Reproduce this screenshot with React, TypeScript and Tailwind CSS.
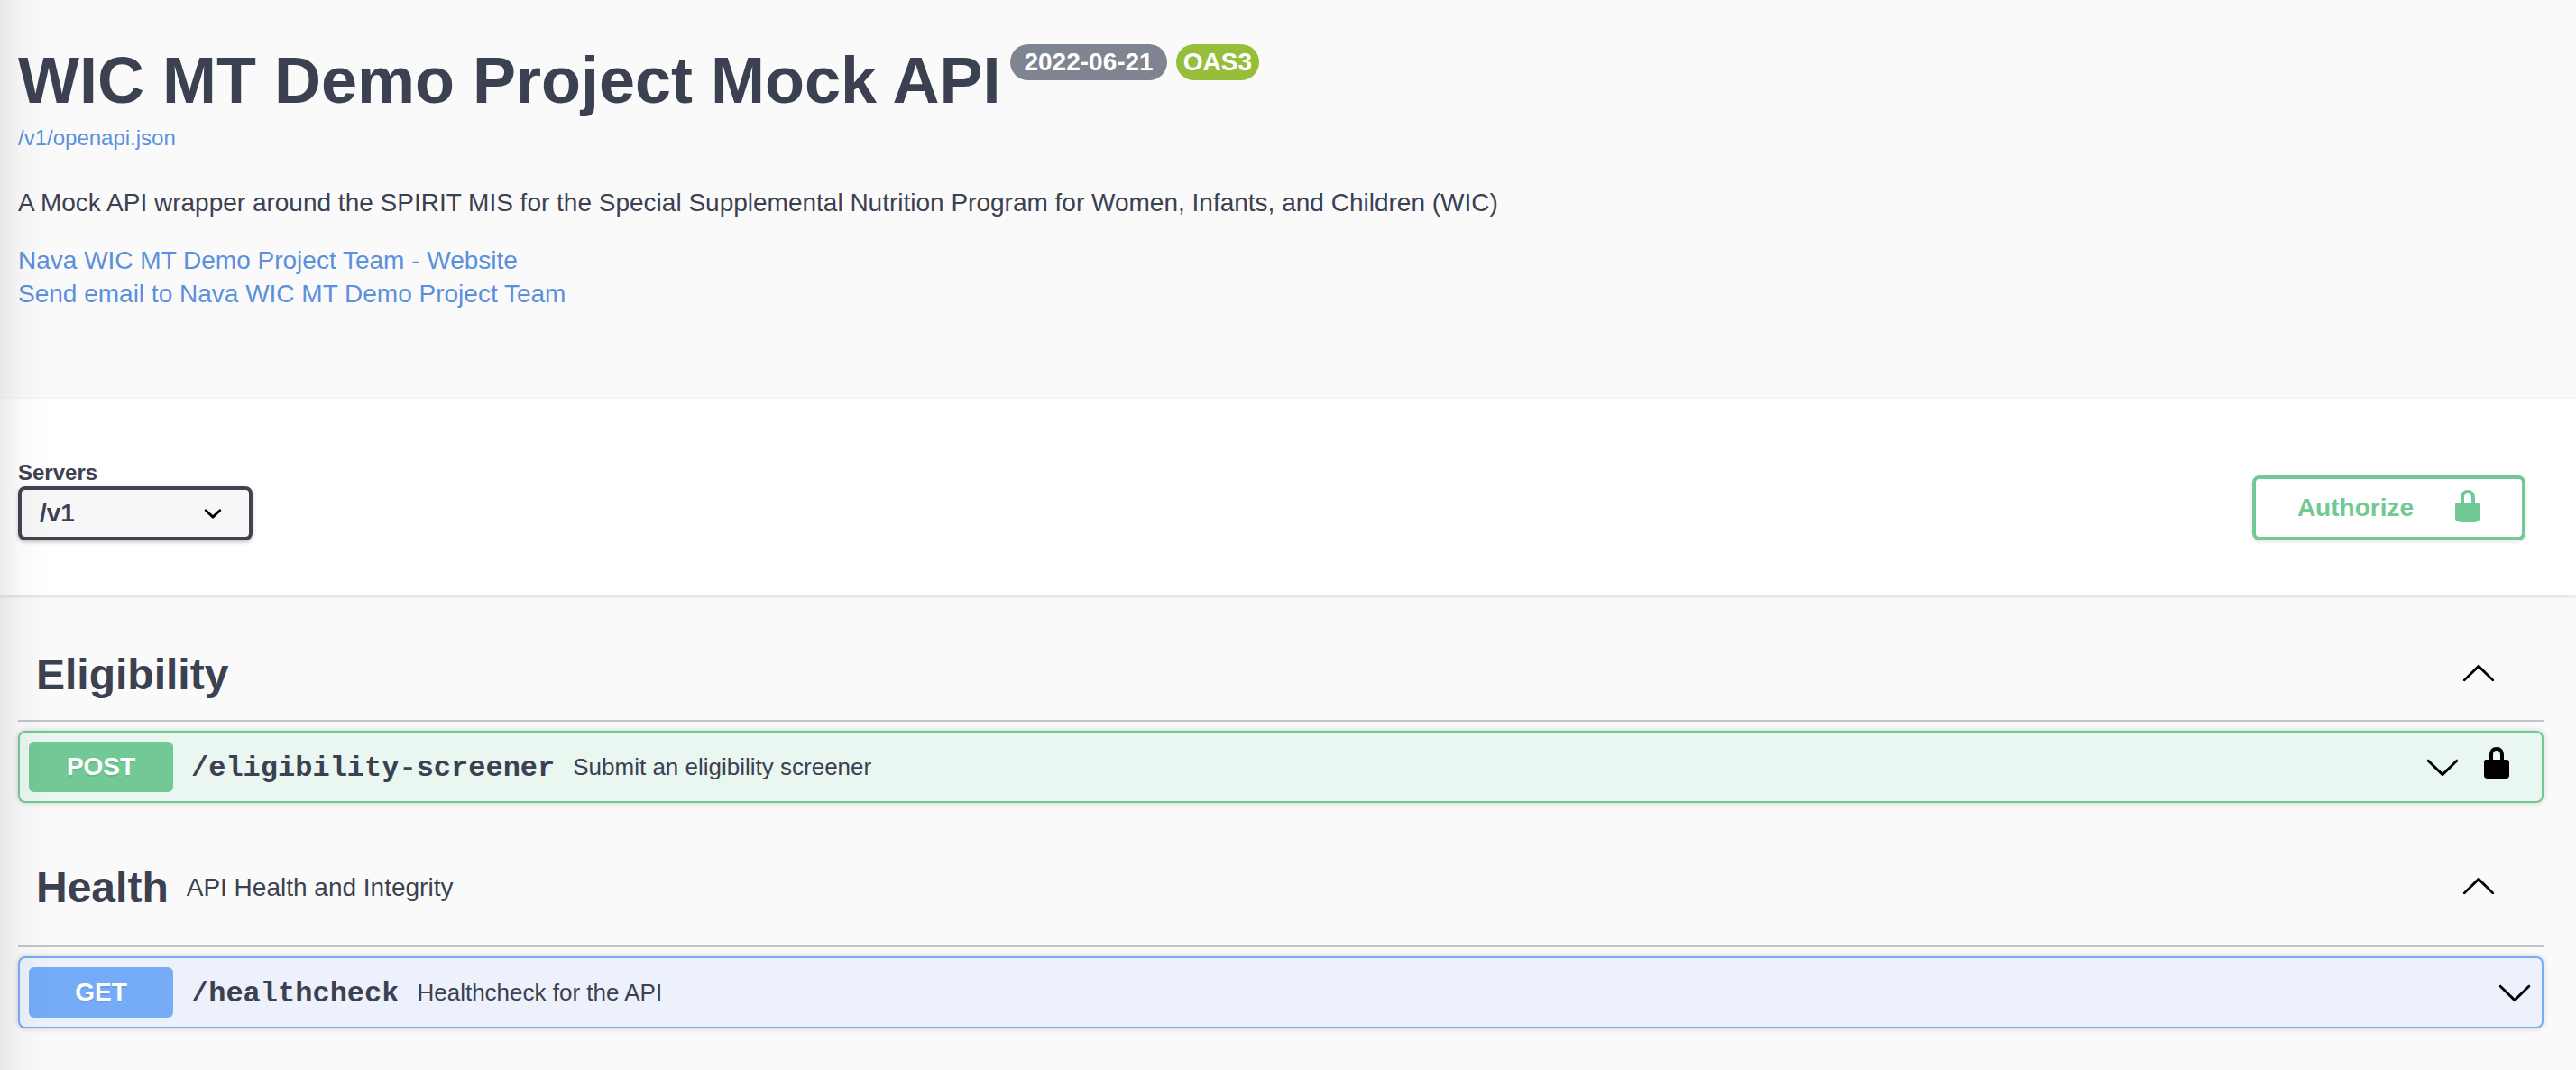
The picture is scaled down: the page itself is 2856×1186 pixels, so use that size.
import { useState } from "react";

function LockIcon() {
  return (
    <svg viewBox="0 0 20 20" className="size-10 fill-current" aria-hidden="true">
      <path d="M15.8 8H14V5.6C14 2.703 12.665 1 10 1 7.334 1 6 2.703 6 5.6V8H4c-.553 0-1 .646-1 1.199V17c0 .549.428 1.139.951 1.307l1.197.387C5.672 18.861 6.55 19 7.1 19h5.8c.549 0 1.428-.139 1.951-.307l1.196-.387c.524-.167.953-.757.953-1.306V9.199C17 8.646 16.352 8 15.8 8zM12 8H8V5.199C8 3.754 8.797 3 10 3c1.203 0 2 .754 2 2.199V8z" />
    </svg>
  );
}

function ChevronDown() {
  return (
    <svg viewBox="0 0 20 20" className="size-10 fill-current" aria-hidden="true">
      <path d="M17.418 6.109c.272-.268.709-.268.979 0s.271.701 0 .969l-7.908 7.83c-.27.268-.707.268-.979 0l-7.908-7.83c-.27-.268-.27-.701 0-.969.271-.268.709-.268.979 0L10 13.25l7.418-7.141z" />
    </svg>
  );
}

function ChevronUp() {
  return (
    <svg viewBox="0 0 20 20" className="size-10 fill-current" aria-hidden="true">
      <path d="M17.418 14.908c.272.268.709.268.979 0s.271-.701 0-.969l-7.908-7.83c-.27-.268-.707-.268-.979 0l-7.908 7.83c-.27.268-.27.701 0 .969.271.268.709.268.979 0L10 7.767l7.418 7.141z" />
    </svg>
  );
}

type Operation = {
  method: "POST" | "GET";
  path: string;
  summary: string;
  locked?: boolean;
};

const methodStyles = {
  POST: { row: "border-[#72c995] bg-[#eaf6f0]", badge: "bg-[#72c995]" },
  GET: { row: "border-[#75abf7] bg-[#ecf1fb]", badge: "bg-[#75abf7]" },
};

function OperationRow({ method, path, summary, locked }: Operation) {
  const style = methodStyles[method];
  return (
    <div
      className={`mt-2.5 flex items-center rounded-lg border-2 p-2.5 shadow-[0_0_6px_rgba(0,0,0,0.19)] ${style.row}`}
    >
      <button type="button" className="flex min-w-0 flex-1 items-center text-left">
        <span
          className={`w-40 shrink-0 rounded-md text-center text-[28px] leading-[56px] font-bold text-white [text-shadow:0_2px_0_rgba(0,0,0,0.1)] ${style.badge}`}
        >
          {method}
        </span>
        <span className="px-5 pt-1 font-['Liberation_Mono',monospace] text-[32px] leading-9 font-bold">
          {path}
        </span>
        <span className="flex-1 text-[26px] leading-9">{summary}</span>
        <span className="text-black">
          <ChevronDown />
        </span>
      </button>
      {locked && (
        <button type="button" aria-label="Authorization required" className="mb-2 px-5 text-black">
          <LockIcon />
        </button>
      )}
    </div>
  );
}

function TagSection({
  name,
  description,
  operations,
}: {
  name: string;
  description?: string;
  operations: Operation[];
}) {
  const [open, setOpen] = useState(true);
  return (
    <section>
      <div
        className={`flex items-center border-b-2 border-[#c1c3c9] pt-5 pr-[52px] pl-5 ${
          description ? "pb-9" : "pb-[22px]"
        }`}
      >
        <h3 className="text-[48px] leading-[56px] font-bold">{name}</h3>
        <p className="flex-1 px-5 text-[28px] leading-9">{description}</p>
        <button
          type="button"
          aria-label={`Toggle ${name}`}
          aria-expanded={open}
          onClick={() => setOpen(!open)}
          className="mb-1.5 text-black"
        >
          <ChevronUp />
        </button>
      </div>
      {open && operations.map((op) => <OperationRow key={op.path} {...op} />)}
    </section>
  );
}

export default function App() {
  return (
    <div className="relative min-h-screen bg-[#fafafa] font-['Liberation_Sans',Arial,sans-serif] text-[#3b4151]">
      <header className="px-5 pt-12 pb-[98px]">
        <div className="flex items-start">
          <h1 className="text-[72px] leading-[82px] font-bold">WIC MT Demo Project Mock API</h1>
          <div className="mt-px ml-[11px] flex gap-2.5 text-[28px] leading-10 font-bold text-white">
            <span className="rounded-full bg-[#7f8491] px-[15px]">2022-06-21</span>
            <span className="rounded-full bg-[#97be3b] px-2">OAS3</span>
          </div>
        </div>
        <a href="/v1/openapi.json" className="mt-[9px] block w-fit text-[24px] leading-7 text-[#5b90dc]">
          /v1/openapi.json
        </a>
        <p className="mt-10 text-[28px] leading-9">
          A Mock API wrapper around the SPIRIT MIS for the Special Supplemental Nutrition Program for
          Women, Infants, and Children (WIC)
        </p>
        <div className="mt-[27px] flex flex-col items-start text-[28px] leading-[37px] text-[#5b90dc]">
          <a href="#website">Nava WIC MT Demo Project Team - Website</a>
          <a href="#email">Send email to Nava WIC MT Demo Project Team</a>
        </div>
      </header>

      <div className="flex items-end justify-between bg-white pt-[68px] pr-14 pb-[60px] pl-5 shadow-[0_2px_4px_rgba(0,0,0,0.15)]">
        <div>
          <label htmlFor="servers" className="block text-[24px] leading-7 font-bold">
            Servers
          </label>
          <div className="relative mt-px w-[260px]">
            <select
              id="servers"
              className="block h-[60px] w-full appearance-none rounded-lg border-4 border-[#41444e] bg-[#f7f7f7] px-5 text-[28px] font-bold shadow-[0_2px_4px_rgba(0,0,0,0.25)]"
            >
              <option>/v1</option>
            </select>
            <svg
              viewBox="0 0 20 20"
              className="pointer-events-none absolute top-2.5 right-6 size-10 fill-black"
              aria-hidden="true"
            >
              <path d="M13.418 7.859a.695.695 0 01.978 0 .68.68 0 010 .969l-3.908 3.83a.697.697 0 01-.979 0l-3.908-3.83a.68.68 0 010-.969.695.695 0 01.978 0L10 11l3.418-3.141z" />
            </svg>
          </div>
        </div>
        <button
          type="button"
          className="flex h-[72px] items-center gap-10 rounded-lg border-4 border-[#72c995] pr-10 pl-[46px] text-[28px] font-bold text-[#72c995] shadow-[0_2px_4px_rgba(0,0,0,0.1)]"
        >
          Authorize
          <span className="mb-1">
            <LockIcon />
          </span>
        </button>
      </div>

      <main className="flex flex-col gap-[46px] pt-[41px] pr-9 pb-[46px] pl-5">
        <TagSection
          name="Eligibility"
          operations={[
            {
              method: "POST",
              path: "/eligibility-screener",
              summary: "Submit an eligibility screener",
              locked: true,
            },
          ]}
        />
        <TagSection
          name="Health"
          description="API Health and Integrity"
          operations={[{ method: "GET", path: "/healthcheck", summary: "Healthcheck for the API" }]}
        />
      </main>

      <div className="pointer-events-none absolute inset-y-0 left-0 w-14 bg-[linear-gradient(to_right,rgba(0,0,0,0.08),rgba(0,0,0,0.025)_40%,transparent)]" />
    </div>
  );
}
